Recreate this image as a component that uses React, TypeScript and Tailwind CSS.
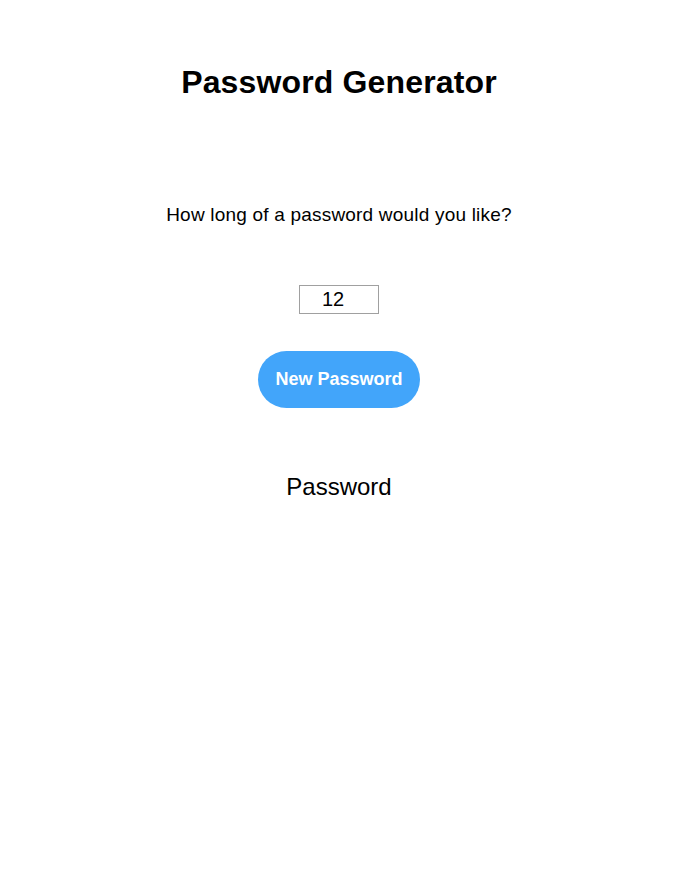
import { useState } from "react";

export default function App() {
  const [length, setLength] = useState("12");

  return (
    <div className="min-h-screen bg-white text-black font-['Liberation_Sans',Arial,sans-serif] flex flex-col items-center">
      <h1 className="mt-[64px] text-[32px] leading-[37px] font-bold tracking-[0.15px]">Password Generator</h1>
      <p className="mt-[103px] text-[19px] leading-[22px] tracking-[0.2px]">How long of a password would you like?</p>
      <input
        type="number"
        value={length}
        onChange={(e) => setLength(e.target.value)}
        className="mt-[59px] w-[80px] h-[29px] border border-[#a0a0a0] pl-[22px] text-[20px] leading-[23px] outline-none"
      />
      <button className="mt-[37px] w-[162px] h-[57px] rounded-full bg-[#42a5fa] text-white text-[18px] font-bold">
        New Password
      </button>
      <div className="mt-[65px] text-[24px] leading-[28px]">Password</div>
    </div>
  );
}
